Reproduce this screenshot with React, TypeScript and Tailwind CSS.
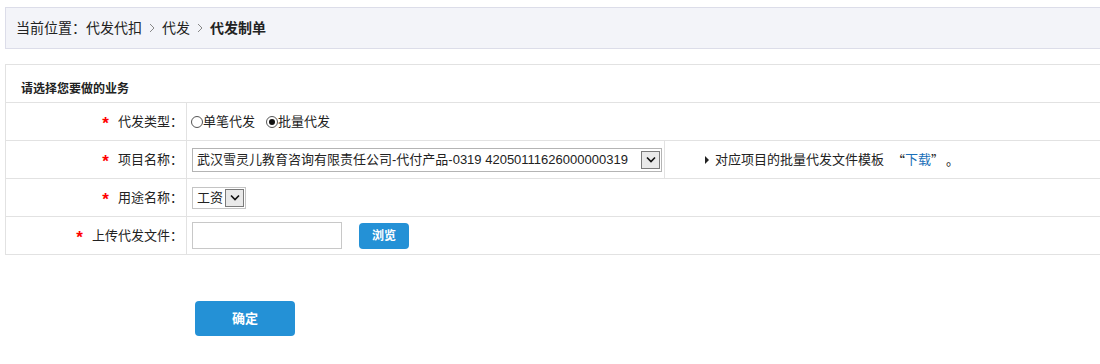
import { ReactNode } from 'react';

const FONT = "font-['Liberation_Sans','Noto_Sans_CJK_SC',sans-serif]";
const CJK = "font-['Noto_Sans_CJK_SC',sans-serif]";

function Chevron() {
  return (
    <svg width="6" height="10" viewBox="0 0 6 10" className="mx-[7px]">
      <path d="M1 1 L5 5 L1 9" fill="none" stroke="#888" strokeWidth="1" />
    </svg>
  );
}

function SelectArrow() {
  return (
    <span className="flex h-[18px] w-[19px] items-center justify-center border border-[#7a7a7a] bg-[#e9e9e9]">
      <svg width="10" height="7" viewBox="0 0 10 7">
        <path d="M1 1.5 L5 5.5 L9 1.5" fill="none" stroke="#111" strokeWidth="1.6" />
      </svg>
    </span>
  );
}

function Radio({ checked, label }: { checked?: boolean; label: string }) {
  return (
    <span className="flex items-center">
      <span className="flex h-[12px] w-[12px] items-center justify-center rounded-full border border-[#555] bg-white">
        {checked && <span className="h-[6px] w-[6px] rounded-full bg-[#111]" />}
      </span>
      <span>{label}</span>
    </span>
  );
}

function Row({ label, children }: { label: string; children: ReactNode }) {
  return (
    <div className="flex h-[38px] border-b border-[#e2e2e2]">
      <div className="flex w-[181px] shrink-0 items-center justify-end border-r border-[#e2e2e2] pr-[3px]">
        <span className="mr-[9px] mt-[4px] text-[17px] font-bold leading-none text-[#ff0000]">*</span>
        <span>{label}：</span>
      </div>
      {children}
    </div>
  );
}

export default function App() {
  return (
    <div className={`h-[364px] w-[1100px] overflow-hidden bg-white text-[13px] text-[#222] ${FONT}`}>
      <div className="pl-[5px] pt-[7px]">
        <div className="flex h-[42px] w-[1200px] items-center border border-[#dcdde9] bg-[#f3f4f9] pl-[10px] text-[14px]">
          <span>当前位置：代发代扣</span>
          <Chevron />
          <span>代发</span>
          <Chevron />
          <span className="font-bold">代发制单</span>
        </div>
      </div>

      <div className="ml-[5px] mt-[15px] w-[1200px] border-l border-t border-[#e2e2e2]">
        <div className="flex h-[38px] items-end border-b border-[#e2e2e2] pb-[5px] pl-[15px] text-[12px] font-bold leading-[16px]">
          请选择您要做的业务
        </div>

        <Row label="代发类型">
          <div className="flex items-center gap-[11px] pl-[4px]">
            <Radio label="单笔代发" />
            <Radio checked label="批量代发" />
          </div>
        </Row>

        <Row label="项目名称">
          <div className="flex w-[478px] shrink-0 items-center border-r border-[#e2e2e2] pl-[5px]">
            <div className="flex h-[24px] w-[470px] items-center justify-between border border-[#b4b4b4] bg-white pl-[4px] pr-[1px]">
              <span className="whitespace-nowrap">武汉雪灵儿教育咨询有限责任公司-代付产品-0319 42050111626000000319</span>
              <SelectArrow />
            </div>
          </div>
          <div className="flex items-center pl-[40px]">
            <svg width="4" height="8" viewBox="0 0 4 8" className="mr-[6px]">
              <path d="M0 0 L4 4 L0 8 Z" fill="#222" />
            </svg>
            <span>对应项目的批量代发文件模板</span>
            <span className={`ml-[8px] ${CJK}`}>“</span>
            <span className="text-[#1a6fb8]">下载</span>
            <span className={CJK}>”</span>
            <span className={`ml-[2px] ${CJK}`}>。</span>
          </div>
        </Row>

        <Row label="用途名称">
          <div className="flex items-center pl-[5px]">
            <div className="flex h-[22px] w-[54px] items-center justify-between border border-[#c4c4c4] bg-white pl-[4px] pr-[1px]">
              <span>工资</span>
              <SelectArrow />
            </div>
          </div>
        </Row>

        <Row label="上传代发文件">
          <div className="flex items-center pl-[5px]">
            <div className="h-[27px] w-[150px] border border-[#c8c8c8] bg-white" />
            <button className="ml-[17px] h-[26px] w-[50px] rounded-[4px] bg-[#2491d6] text-[12px] font-bold text-white">
              浏览
            </button>
          </div>
        </Row>
      </div>

      <div className="ml-[195px] mt-[46px]">
        <button className="h-[35px] w-[100px] rounded-[4px] bg-[#2491d6] text-[13px] font-bold text-white">
          确定
        </button>
      </div>
    </div>
  );
}
